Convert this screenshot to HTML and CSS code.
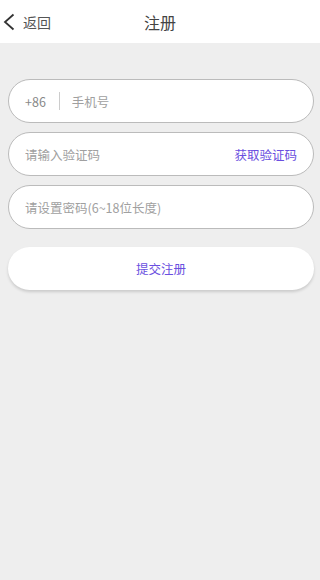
FILE: index.html
```html
<!DOCTYPE html>
<html lang="zh-CN">
  <head>
    <meta charset="UTF-8" />
    <meta name="viewport" content="width=device-width, initial-scale=1.0" />
    <title>注册</title>
    <link rel="stylesheet" href="styles.css">
  </head>
  <body>
    <div class="header">
      <a class="back" href="#">
        <svg width="13" height="18" viewBox="0 0 13 18">
          <path d="M11.5 1.5 L3 9 L11.5 16.5" fill="none" stroke="#333" stroke-width="1.8" />
        </svg>
        <span>返回</span>
      </a>
      <h1>注册</h1>
    </div>

    <form class="form">
      <div class="field">
        <span class="prefix">+86</span>
        <span class="divider"></span>
        <input type="tel" placeholder="手机号" />
      </div>
      <div class="field">
        <input type="text" placeholder="请输入验证码" />
        <button type="button" class="code">获取验证码</button>
      </div>
      <div class="field">
        <input type="password" placeholder="请设置密码(6~18位长度)" />
      </div>
      <button type="button" class="submit">提交注册</button>
    </form>
  </body>
</html>
```

FILE: styles.css
```css
body {
  margin: 0;
  min-height: 580px;
  background-color: #eeeeee;
  font-family: "Noto Sans CJK SC", "Noto Sans", sans-serif;
}
.header {
  position: relative;
  height: 43px;
  background-color: #ffffff;
  display: flex;
  align-items: center;
  justify-content: center;
}
.header h1 {
  margin: 0;
  font-size: 16px;
  font-weight: normal;
  color: #444;
}
.back {
  position: absolute;
  left: 2px;
  top: 0;
  height: 43px;
  display: flex;
  align-items: center;
  gap: 8px;
  color: #555;
  font-size: 14px;
  text-decoration: none;
}
.back svg {
  display: block;
}
.form {
  display: flex;
  flex-direction: column;
  gap: 9px;
  padding: 36px 6px 0 8px;
}
.field {
  height: 42px;
  display: flex;
  align-items: center;
  padding: 0 16px;
  background-color: #ffffff;
  border: 1px solid #bbbbbb;
  border-radius: 23px;
}
.field input {
  flex: 1;
  min-width: 0;
  border: none;
  outline: none;
  background: transparent;
  padding: 0;
  font-family: inherit;
  font-size: 12.5px;
  color: #333;
}
.field input::placeholder {
  color: #a0a0a0;
}
.prefix {
  font-size: 12.5px;
  color: #888;
}
.divider {
  width: 1px;
  height: 18px;
  background-color: #cccccc;
  margin: 0 12px 0 13px;
}
.code {
  border: none;
  background: none;
  padding: 0;
  font-family: inherit;
  font-size: 12.5px;
  color: #6a4fe0;
}
.submit {
  margin-top: 9px;
  height: 43px;
  border: none;
  border-radius: 22px;
  background-color: #ffffff;
  box-shadow: 0 2px 3px rgba(0, 0, 0, 0.15);
  font-family: inherit;
  font-size: 12.5px;
  color: #6a4fe0;
}
```
